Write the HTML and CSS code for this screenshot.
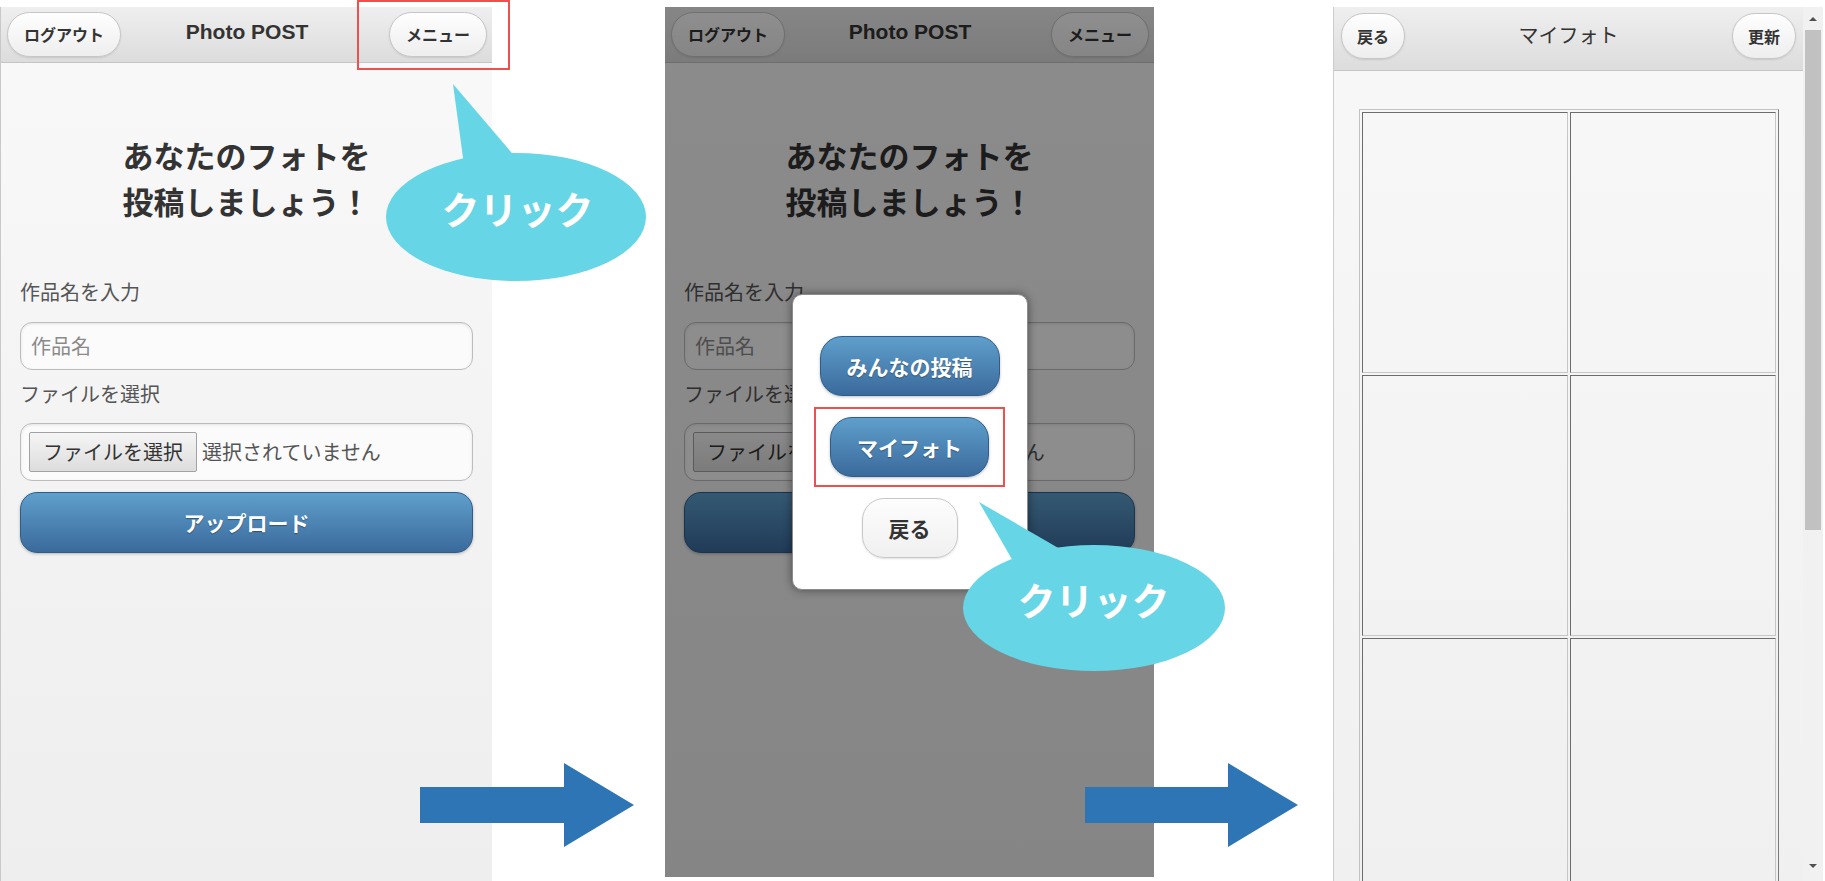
FILE: index.html
```html
<!DOCTYPE html>
<html lang="ja">
<head>
<meta charset="utf-8">
<title>Photo POST</title>
<link rel="stylesheet" href="styles.css">
</head>
<body>
<div class="canvas">

  <section class="phone phone-1">
    <header class="bar bar-main">
      <span class="bar-btn start">ログアウト</span>
      <h1 class="bar-title latin">Photo POST</h1>
      <span class="bar-btn end">メニュー</span>
    </header>
    <div class="form">
      <h2 class="lead">あなたのフォトを<br>投稿しましょう！</h2>
      <p class="field-label label-name">作品名を入力</p>
      <div class="text-input"><span class="placeholder">作品名</span></div>
      <p class="field-label label-file">ファイルを選択</p>
      <div class="file-input"><span class="file-btn">ファイルを選択</span><span class="file-status">選択されていません</span></div>
      <div class="upload-btn">アップロード</div>
    </div>
  </section>

  <section class="phone phone-2">
    <header class="bar bar-main">
      <span class="bar-btn start">ログアウト</span>
      <h1 class="bar-title latin">Photo POST</h1>
      <span class="bar-btn end">メニュー</span>
    </header>
    <div class="form">
      <h2 class="lead">あなたのフォトを<br>投稿しましょう！</h2>
      <p class="field-label label-name">作品名を入力</p>
      <div class="text-input"><span class="placeholder">作品名</span></div>
      <p class="field-label label-file">ファイルを選択</p>
      <div class="file-input"><span class="file-btn">ファイルを選択</span><span class="file-status">選択されていません</span></div>
      <div class="upload-btn">アップロード</div>
    </div>
    <div class="dim">
      <div class="popup">
        <span class="pop-btn blue">みんなの投稿</span>
        <div class="focus-box"><span class="pop-btn blue">マイフォト</span></div>
        <span class="pop-btn plain">戻る</span>
      </div>
    </div>
  </section>

  <section class="phone phone-3">
    <div class="main">
      <header class="bar bar-tall">
        <span class="bar-btn small start">戻る</span>
        <h1 class="bar-title jp">マイフォト</h1>
        <span class="bar-btn small end">更新</span>
      </header>
      <div class="gallery">
        <table class="photo-grid">
          <tr><td><div class="slot"></div></td><td><div class="slot"></div></td></tr>
          <tr><td><div class="slot"></div></td><td><div class="slot"></div></td></tr>
          <tr><td><div class="slot"></div></td><td><div class="slot"></div></td></tr>
        </table>
      </div>
    </div>
    <div class="scrollbar">
      <span class="sb-btn up"><span class="tri-up"></span></span>
      <div class="sb-track"><div class="sb-thumb"></div></div>
      <span class="sb-btn down"><span class="tri-down"></span></span>
    </div>
  </section>

  <div class="mark mark-menu"></div>

  <div class="callout callout-1">
    <svg width="275" height="205" viewBox="0 0 275 205"><polygon points="73,4 86,100 155,100"/><ellipse cx="136" cy="137" rx="130" ry="64"/></svg>
    <span class="callout-text">クリック</span>
  </div>

  <div class="callout callout-2">
    <svg width="280" height="185" viewBox="0 0 280 185"><polygon points="24,7 66,80 150,80"/><ellipse cx="139" cy="113" rx="131" ry="63"/></svg>
    <span class="callout-text">クリック</span>
  </div>

  <svg class="flow-arrow arrow-1" width="214" height="84" viewBox="0 0 214 84"><polygon points="0,24 144,24 144,0 214,42 144,84 144,60 0,60"/></svg>
  <svg class="flow-arrow arrow-2" width="214" height="84" viewBox="0 0 214 84"><polygon points="0,24 143,24 143,0 213,42 143,84 143,60 0,60"/></svg>

</div>
</body>
</html>
```

FILE: styles.css
```css
* { box-sizing: border-box; margin: 0; padding: 0; }

html, body {
  width: 1825px;
  height: 881px;
  overflow: hidden;
  background: #ffffff;
}

body {
  font-family: "Liberation Sans", "Noto Sans CJK JP", sans-serif;
  color: #333333;
}

.canvas {
  position: relative;
  display: flex;
  align-items: flex-start;
  height: 881px;
  padding-top: 7px;
}

/* ---------- phone panels ---------- */
.phone {
  position: relative;
  display: flex;
  flex-direction: column;
  overflow: hidden;
  background: linear-gradient(#f9f9f9, #eeeeee);
  flex: none;
}

.phone-1 {
  width: 492px;
  height: 874px;
  border-left: 1px solid #c9c9c9;
}

.phone-2 {
  width: 489px;
  height: 870px;
  margin-left: 173px;
}

.phone-3 {
  width: 490px;
  height: 874px;
  margin-left: 179px;
  flex-direction: row;
  background: #f1f1f1;
}

/* ---------- header bar ---------- */
.bar {
  display: grid;
  grid-template-columns: 1fr auto 1fr;
  align-items: start;
  flex: none;
  background: linear-gradient(#efefef, #dcdcdc);
  border-bottom: 1px solid #c5c5c5;
}

.bar-main {
  height: 56px;
  padding: 5px 5px 0 6px;
}

.bar-tall {
  height: 64px;
  padding: 6px 7px 0 7px;
}

.bar-btn {
  height: 45px;
  padding: 0 16px;
  border: 1px solid #c6c6c6;
  border-radius: 23px;
  background: linear-gradient(#fefefe, #eeeeee);
  box-shadow: 0 1px 2px rgba(0, 0, 0, 0.10);
  font: bold 16px/43px "Noto Sans CJK JP", sans-serif;
  color: #333333;
  white-space: nowrap;
}

.bar-btn.small {
  height: 46px;
  padding: 0 15px;
  line-height: 44px;
}

.bar-btn.start { justify-self: start; }
.bar-btn.end { justify-self: end; }

.bar-title {
  white-space: nowrap;
  text-align: center;
  color: #333333;
}

.bar-title.latin {
  font: bold 21px/39px "Liberation Sans", "Noto Sans CJK JP", sans-serif;
}

.bar-title.jp {
  font: normal 20px/42px "Noto Sans CJK JP", sans-serif;
  margin-top: 1px;
}

/* ---------- upload form ---------- */
.form {
  display: flex;
  flex-direction: column;
  padding: 0 19px 0 19px;
}

.lead {
  margin-top: 69px;
  font: bold 31px/46px "Noto Sans CJK JP", sans-serif;
  text-align: center;
  color: #333333;
}

.field-label {
  font: normal 20px/30px "Noto Sans CJK JP", sans-serif;
  color: #555555;
}

.label-name { margin-top: 53px; }
.label-file { margin-top: 9px; }

.text-input,
.file-input {
  display: flex;
  align-items: center;
  border: 1px solid #bcbcbc;
  border-radius: 12px;
  background: #fbfbfb;
  box-shadow: inset 0 1px 3px rgba(0, 0, 0, 0.10);
}

.text-input {
  margin-top: 15px;
  height: 48px;
  padding-left: 10px;
}

.placeholder {
  font: normal 20px/1 "Noto Sans CJK JP", sans-serif;
  color: #8a8a8a;
}

.file-input {
  margin-top: 14px;
  height: 58px;
  padding: 8px;
  gap: 5px;
}

.file-btn {
  height: 40px;
  padding: 0 13px;
  border: 1px solid #a2a2a2;
  border-radius: 2px;
  background: linear-gradient(#f5f5f5, #dddddd);
  font: normal 20px/38px "Noto Sans CJK JP", sans-serif;
  color: #333333;
  white-space: nowrap;
}

.file-status {
  font: normal 20px/1 "Noto Sans CJK JP", sans-serif;
  color: #555555;
  white-space: nowrap;
}

.upload-btn,
.pop-btn.blue {
  border: 1px solid #2e5d8a;
  background: linear-gradient(#5f9fcc, #3a6a9c);
  color: #ffffff;
  text-shadow: 0 1px 1px rgba(0, 0, 0, 0.35);
  box-shadow: 0 1px 3px rgba(0, 0, 0, 0.25);
}

.upload-btn {
  margin-top: 11px;
  height: 61px;
  border-radius: 17px;
  font: bold 21px/59px "Noto Sans CJK JP", sans-serif;
  text-align: center;
}

/* ---------- dim + popup ---------- */
.dim {
  position: absolute;
  inset: 0;
  display: flex;
  align-items: center;
  justify-content: center;
  background: rgba(0, 0, 0, 0.44);
}

.popup {
  width: 236px;
  height: 296px;
  display: flex;
  flex-direction: column;
  align-items: center;
  padding-top: 41px;
  background: #ffffff;
  border: 1px solid #8c8c8c;
  border-radius: 10px;
  box-shadow: 0 0 10px rgba(0, 0, 0, 0.45);
}

.pop-btn {
  display: block;
  height: 60px;
  padding: 0 26px;
  border-radius: 22px;
  font: bold 21px/58px "Noto Sans CJK JP", sans-serif;
  white-space: nowrap;
}

.pop-btn.plain {
  border: 1px solid #c8c8c8;
  background: linear-gradient(#fdfdfd, #f0f0f0);
  color: #333333;
  box-shadow: 0 1px 2px rgba(0, 0, 0, 0.12);
}

.focus-box {
  margin: 11px 0;
  padding: 8px 14px;
  border: 2px solid #ee4f4f;
}

/* ---------- my photo panel ---------- */
.main {
  width: 470px;
  display: flex;
  flex-direction: column;
  border-left: 1px solid #cdcdcd;
  background: linear-gradient(#f8f8f8, #f0f0f0);
}

.gallery {
  flex: 1;
  overflow: hidden;
  padding-top: 38px;
}

.photo-grid {
  margin: 0 auto;
  border-collapse: separate;
  border-spacing: 2px;
  border: 1px solid;
  border-color: #c2c2c2 #7a7a7a #7a7a7a #c2c2c2;
}

.photo-grid td {
  padding: 0;
  border: 1px solid;
  border-color: #6c6c6c #c6c6c6 #c6c6c6 #6c6c6c;
}

.slot {
  width: 204px;
  height: 259px;
}

.scrollbar {
  width: 20px;
  display: flex;
  flex-direction: column;
  background: #f1f1f1;
}

.sb-btn {
  display: flex;
  align-items: center;
  justify-content: center;
  flex: none;
  height: 23px;
}

.sb-btn.down { height: 30px; }

.tri-up,
.tri-down {
  width: 0;
  height: 0;
  border-left: 4px solid transparent;
  border-right: 4px solid transparent;
}

.tri-up { border-bottom: 4px solid #505050; }
.tri-down { border-top: 4px solid #505050; }

.sb-track {
  flex: 1;
  padding: 0 2px;
}

.sb-thumb {
  height: 500px;
  background: #c1c1c1;
}

/* ---------- annotations ---------- */
.mark-menu {
  position: absolute;
  left: 357px;
  top: 0;
  width: 153px;
  height: 70px;
  border: 2px solid #ee4f4f;
}

.callout {
  position: absolute;
}

.callout svg {
  display: block;
  fill: #66d5e5;
}

.callout-1 { left: 380px; top: 80px; }
.callout-2 { left: 955px; top: 495px; }

.callout-text {
  position: absolute;
  left: 0;
  font: bold 38px/50px "Noto Sans CJK JP", sans-serif;
  color: #ffffff;
  text-align: center;
  white-space: nowrap;
}

.callout-1 .callout-text { top: 103px; width: 275px; }
.callout-2 .callout-text { top: 79px; width: 277px; }

.flow-arrow {
  position: absolute;
  top: 763px;
  fill: #2e75b6;
}

.arrow-1 { left: 420px; }
.arrow-2 { left: 1085px; }
```
